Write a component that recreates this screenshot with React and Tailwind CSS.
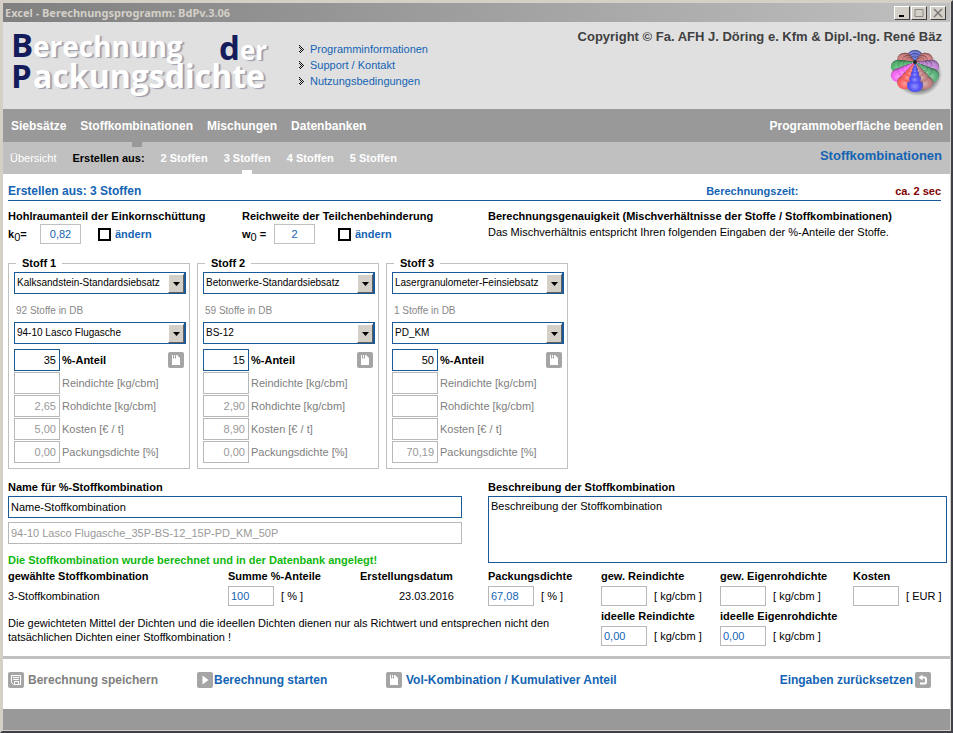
import React from "react";

const mainNav = ["Siebsätze", "Stoffkombinationen", "Mischungen", "Datenbanken"];
const subNav = ["2 Stoffen", "3 Stoffen", "4 Stoffen", "5 Stoffen"];
const infoLinks = ["Programminformationen", "Support / Kontakt", "Nutzungsbedingungen"];

const stoffe = [
  {
    nr: 1,
    siebsatz: "Kalksandstein-Standardsiebsatz",
    anzahl: 92,
    stoff: "94-10 Lasco Flugasche",
    anteil: "35",
    rohdichte: "2,65",
    kosten: "5,00",
    packung: "0,00",
  },
  {
    nr: 2,
    siebsatz: "Betonwerke-Standardsiebsatz",
    anzahl: 59,
    stoff: "BS-12",
    anteil: "15",
    rohdichte: "2,90",
    kosten: "8,90",
    packung: "0,00",
  },
  {
    nr: 3,
    siebsatz: "Lasergranulometer-Feinsiebsatz",
    anzahl: 1,
    stoff: "PD_KM",
    anteil: "50",
    rohdichte: "",
    kosten: "",
    packung: "70,19",
  },
];

// One colour per arm, clockwise from the bottom
const armColors = [
  "#3a3af8", "#fa4a4a", "#f452f4", "#3cae5c", "#d07070", "#6474f0",
  "#d87878", "#b878d0", "#44a868", "#b87070",
];

function Logo() {
  return (
    <svg
      width="270"
      height="76"
      viewBox="0 0 270 76"
      role="img"
      aria-label="Berechnung der Packungsdichte"
      className="shrink-0 font-['Open_Sans',sans-serif] font-bold"
    >
      <g fill="#ffffff" className="[text-shadow:2px_1px_1px_#9a9cab]">
        <text x="30" y="35" fontSize="28">erechnung</text>
        <text x="237" y="38" fontSize="26">er</text>
        <text x="30" y="66" fontSize="32">ackungsdichte</text>
      </g>
      <g fill="#141c5c">
        <text x="8" y="35" fontSize="33">B</text>
        <text x="216" y="38" fontSize="33">d</text>
        <text x="8" y="66" fontSize="33">P</text>
      </g>
    </svg>
  );
}

function SphereCluster() {
  const balls = [];
  for (let ring = 0; ring < 7; ring++) {
    const t = Math.pow(0.72, ring);
    const arms = armColors.map((color, i) => {
      const a = Math.PI / 2 + (i * Math.PI * 2) / armColors.length;
      return {
        key: `${ring}-${i}`,
        cx: 25 + Math.cos(a) * 17 * t,
        cy: 13 + 9 * t + Math.sin(a) * 14 * t,
        rx: 8 * t,
        ry: 7 * t,
        color,
      };
    });
    // the lower balls lie in front
    arms.sort((p, q) => p.cy - q.cy);
    balls.push(...arms);
  }
  return (
    <svg width="52" height="48" viewBox="0 0 52 48" aria-hidden="true">
      <defs>
        <radialGradient id="shine" cx="0.48" cy="0.6" r="0.6">
          <stop offset="0" stopColor="#fff" stopOpacity="0.45" />
          <stop offset="0.6" stopColor="#fff" stopOpacity="0.1" />
          <stop offset="1" stopColor="#000" stopOpacity="0.55" />
        </radialGradient>
        <radialGradient id="ground">
          <stop offset="0.75" stopColor="#555" stopOpacity="0.7" />
          <stop offset="1" stopColor="#555" stopOpacity="0" />
        </radialGradient>
      </defs>
      <ellipse cx="28" cy="25" rx="24" ry="22" fill="url(#ground)" />
      {balls.map((b) => (
        <g key={b.key}>
          <ellipse cx={b.cx} cy={b.cy} rx={b.rx} ry={b.ry} fill={b.color} />
          <ellipse cx={b.cx} cy={b.cy} rx={b.rx} ry={b.ry} fill="url(#shine)" />
        </g>
      ))}
      <circle cx="25" cy="13" r="2" fill="#222" />
    </svg>
  );
}

function BulletArrow() {
  return (
    <svg width="5" height="8" viewBox="0 0 5 8" fill="#111" shapeRendering="crispEdges" aria-hidden="true">
      <path d="M0 0h1v1H0zM1 1h1v1H1zM0 2h1v1H0zM2 2h1v1H2zM1 3h1v1H1zM3 3h1v1H3zM2 4h1v1H2zM4 4h1v1H4zM1 5h1v1H1zM3 5h1v1H3zM0 6h1v1H0zM2 6h1v1H2zM1 7h1v1H1z" />
    </svg>
  );
}

function ToolIcon({ type }) {
  return (
    <svg width="16" height="16" viewBox="0 0 16 16" className="shrink-0" aria-hidden="true">
      <rect width="16" height="16" rx="2" fill="#a5a5a5" />
      {type === "book" && (
        <>
          <path d="M4 3h5l3 3v7H4z" fill="#fff" />
          <path d="M5 3h3v4L6.500 5.500 5 7z" fill="#a5a5a5" />
          <path d="M6 3h1v2.500H6z" fill="#fff" />
        </>
      )}
      {type === "play" && <path d="M5.500 3.500 11.500 8l-6 4.500z" fill="#fff" />}
      {type === "save" && (
        <>
          <path d="M3.500 3.500h9v9h-7l-2-2z" fill="none" stroke="#fff" />
          <path d="M5 5.500h6M5 7.500h6M6.500 12.500v-3h4v3" fill="none" stroke="#fff" />
        </>
      )}
      {type === "reset" && (
        <>
          <path d="M7 5.500h2.500a1.500 1.500 0 0 1 1.500 1.500v3a1.500 1.500 0 0 1-1.500 1.500H5" fill="none" stroke="#fff" strokeWidth="2" />
          <path d="M3.500 5.500 7.500 2.500v6z" fill="#fff" />
        </>
      )}
    </svg>
  );
}

function WindowButton({ label, children }) {
  return (
    <button
      type="button"
      aria-label={label}
      className="flex h-[14px] w-4 items-center justify-center border border-t-white border-l-white border-r-[#404040] border-b-[#404040] bg-[#d4d0c8]"
    >
      <svg width="10" height="10" viewBox="0 0 10 10" fill="none" className="shrink-0" aria-hidden="true">
        {children}
      </svg>
    </button>
  );
}

function DropDown({ label, value }) {
  return (
    <div className="relative">
      <select
        aria-label={label}
        defaultValue={value}
        className="block h-[22px] w-full appearance-none rounded-none border border-r-2 border-[#1b5a96] bg-white pr-[18px] pl-[2px] text-[10px] text-black"
      >
        <option>{value}</option>
      </select>
      <span className="pointer-events-none absolute top-[2px] right-[2px] flex h-[19px] w-4 items-center justify-center border border-t-white border-l-white border-r-[#606060] border-b-[#606060] bg-[#d4d0c8]">
        <svg width="7" height="4" viewBox="0 0 7 4" aria-hidden="true">
          <path d="M0 0h7L3.500 4z" />
        </svg>
      </span>
    </div>
  );
}

function ValueRow({ id, label, value }) {
  return (
    <div className="flex items-center gap-[2px] text-[#808080]">
      <input
        id={id}
        readOnly
        defaultValue={value}
        className="h-[22px] w-[46px] border border-[#b8b8b8] bg-white px-[3px] text-right text-[#999]"
      />
      <label htmlFor={id}>{label}</label>
    </div>
  );
}

function StoffBox({ data }) {
  const id = `stoff${data.nr}`;
  return (
    <fieldset className="w-[182px] border border-[#c0c0c0] pr-[3px] pb-[5px] pl-[5px]">
      <legend className="ml-[2px] px-[6px] leading-[14px] font-bold">Stoff {data.nr}</legend>
      <div className="mt-[2px]">
        <DropDown label={`Siebsatz ${data.nr}`} value={data.siebsatz} />
      </div>
      <p className="mt-[10px] mb-1 pl-[2px] text-[10px] leading-[14px] text-[#888]">{data.anzahl} Stoffe in DB</p>
      <DropDown label={`Stoff ${data.nr}`} value={data.stoff} />
      <div className="mt-[5px] flex flex-col gap-px">
        <div className="flex items-center gap-[2px]">
          <input
            id={`${id}-anteil`}
            defaultValue={data.anteil}
            className="h-[22px] w-[46px] border border-[#1b5a96] bg-white px-[3px] text-right"
          />
          <label htmlFor={`${id}-anteil`} className="flex-1 font-bold">
            %-Anteil
          </label>
          <button type="button" aria-label={`Stoff ${data.nr} anzeigen`} className="mr-[2px]">
            <ToolIcon type="book" />
          </button>
        </div>
        <ValueRow id={`${id}-rein`} label="Reindichte [kg/cbm]" value="" />
        <ValueRow id={`${id}-roh`} label="Rohdichte [kg/cbm]" value={data.rohdichte} />
        <ValueRow id={`${id}-kosten`} label="Kosten [€ / t]" value={data.kosten} />
        <ValueRow id={`${id}-packung`} label="Packungsdichte [%]" value={data.packung} />
      </div>
    </fieldset>
  );
}

function Parameter({ id, title, symbol, value, checkClass }) {
  return (
    <div>
      <h2 className="leading-[15px] font-bold">{title}</h2>
      <div className="flex h-5 items-center">
        <label htmlFor={id} className="w-8 font-bold whitespace-nowrap">
          {symbol}
          <sub className="text-[11px] font-normal">0</sub>
          {symbol === "w" ? " =" : "="}
        </label>
        <input
          id={id}
          readOnly
          defaultValue={value}
          className="h-5 w-[41px] border border-[#c0c0c0] bg-white text-center text-[#1464b4]"
        />
        <input
          id={`${id}-change`}
          type="checkbox"
          className={`${checkClass} size-[13px] appearance-none border-2 border-black bg-white checked:bg-black`}
        />
        <label htmlFor={`${id}-change`} className="pl-1 font-bold text-[#1464b4]">
          ändern
        </label>
      </div>
    </div>
  );
}

function Result({ id, label, value, unit }) {
  return (
    <div className="whitespace-nowrap">
      <label htmlFor={id} className="block leading-[14px] font-bold">
        {label}
      </label>
      <div className="mt-[3px] flex items-center gap-[7px]">
        <input
          id={id}
          readOnly
          defaultValue={value}
          className="h-5 w-[46px] border border-[#b8b8b8] bg-white px-[2px] text-[#1464b4]"
        />
        <span>[ {unit} ]</span>
      </div>
    </div>
  );
}

function App() {
  return (
    <div className="flex min-h-screen flex-col border-2 border-t-[#d4d0c8] border-r-[#404048] border-b-[#404048] border-l-[#d4d0c8] bg-white font-['Liberation_Sans',Arial,sans-serif] text-[11px] leading-[14px] text-black">
      <div className="flex flex-1 flex-col border border-[#d4d0c8]">
        {/* Title bar */}
        <div className="flex h-[19px] items-center gap-px bg-linear-to-r from-[#808080] to-[#c0c0c0] pr-1 pl-[2px]">
          <h1 className="flex-1 font-['Noto_Sans',sans-serif] font-bold text-[#d4d0c8]">
            Excel - Berechnungsprogramm: BdPv.3.06
          </h1>
          <WindowButton label="Minimieren">
            <path d="M2 8h5" stroke="#000" strokeWidth="2" />
          </WindowButton>
          <WindowButton label="Maximieren">
            <path d="M1 1.500h8v7H1z" stroke="#888" />
          </WindowButton>
          <span className="w-px" />
          <WindowButton label="Schließen">
            <path d="M1 1l8 8M9 1l-8 8" stroke="#777" strokeWidth="1.500" />
          </WindowButton>
        </div>

        <header className="flex h-[87px] bg-[#e0e0e0] pr-2">
          <Logo />
          <ul className="mt-[19px] ml-[26px] flex-1">
            {infoLinks.map((text) => (
              <li key={text} className="flex h-4 items-center gap-[6px]">
                <BulletArrow />
                <a href="#" className="text-[#1464b4]">
                  {text}
                </a>
              </li>
            ))}
          </ul>
          <div className="flex flex-col items-end pt-[7px]">
            <p className="text-[13px] leading-4 font-bold text-[#404040]">
              Copyright © Fa. AFH J. Döring e. Kfm &amp; Dipl.-Ing. René Bäz
            </p>
            <div className="mt-1">
              <SphereCluster />
            </div>
          </div>
        </header>

        <nav className="flex h-[33px] items-center gap-[14px] bg-[#999] pr-[7px] pl-2 text-[12px] font-bold text-white">
          {mainNav.map((text) => (
            <a key={text} href="#" className="relative flex h-full items-center">
              {text}
              {text === "Stoffkombinationen" && (
                <span className="absolute top-full left-1/2 h-[5px] w-[10px] -translate-x-1/2 bg-[#999]" />
              )}
            </a>
          ))}
          <a href="#" className="ml-auto">
            Programmoberfläche beenden
          </a>
        </nav>

        <nav className="flex h-8 items-center gap-4 bg-[#c0c0c0] pr-2 pl-[7px] font-bold text-white">
          <a href="#" className="font-normal">
            Übersicht
          </a>
          <span className="text-black">Erstellen aus:</span>
          {subNav.map((text) => (
            <a key={text} href="#" className="relative flex h-full items-center">
              {text}
              {text === "3 Stoffen" && (
                <span className="absolute bottom-0 left-1/2 h-1 w-[10px] -translate-x-1/2 bg-white" />
              )}
            </a>
          ))}
          <span className="ml-auto pb-1 text-[13px] text-[#1464b4]">Stoffkombinationen</span>
        </nav>

        <main className="flex-1 pt-[9px] pr-[3px] pl-[5px]">
          <div className="mr-[6px] flex h-[18px] items-center border-b border-[#1b5a96] pb-[2px] font-bold text-[#1464b4]">
            <h2 className="flex-1 text-[12px]">Erstellen aus: 3 Stoffen</h2>
            <span className="w-[189px]">Berechnungszeit:</span>
            <span className="text-[#800000]">ca. 2 sec</span>
          </div>

          <section className="mt-2 grid grid-cols-[234px_246px_1fr]">
            <Parameter
              id="k0"
              title="Hohlraumanteil der Einkornschüttung"
              symbol="k"
              value="0,82"
              checkClass="ml-[17px]"
            />
            <Parameter
              id="w0"
              title="Reichweite der Teilchenbehinderung"
              symbol="w"
              value="2"
              checkClass="ml-[23px]"
            />
            <div>
              <h2 className="leading-[15px] font-bold">
                Berechnungsgenauigkeit (Mischverhältnisse der Stoffe / Stoffkombinationen)
              </h2>
              <p className="mt-px">Das Mischverhältnis entspricht Ihren folgenden Eingaben der %-Anteile der Stoffe.</p>
            </div>
          </section>

          <section className="mt-3 flex gap-[7px]">
            {stoffe.map((s) => (
              <StoffBox key={s.nr} data={s} />
            ))}
          </section>

          <section className="mt-[11px] flex gap-[26px]">
            <div className="w-[454px]">
              <label htmlFor="name" className="block font-bold">
                Name für %-Stoffkombination
              </label>
              <input
                id="name"
                defaultValue="Name-Stoffkombination"
                className="mt-[2px] block h-[22px] w-full border border-[#1b5a96] bg-white px-[2px]"
              />
              <input
                aria-label="Vorgeschlagener Name"
                readOnly
                defaultValue="94-10 Lasco Flugasche_35P-BS-12_15P-PD_KM_50P"
                className="mt-1 block h-[22px] w-full border border-[#b8b8b8] bg-white px-[2px] text-[#999]"
              />
              <p className="mt-[9px] font-bold text-[#10b810]">
                Die Stoffkombination wurde berechnet und in der Datenbank angelegt!
              </p>
              <div className="mt-[2px] grid grid-cols-[220px_132px_1fr]">
                <div>
                  <h3 className="font-bold">gewählte Stoffkombination</h3>
                  <p className="mt-[6px]">3-Stoffkombination</p>
                </div>
                <Result id="summe" label="Summe %-Anteile" value="100" unit="%" />
                <div>
                  <h3 className="font-bold">Erstellungsdatum</h3>
                  <p className="mt-[6px] pr-2 text-right">23.03.2016</p>
                </div>
              </div>
              <p className="mt-[10px] w-[552px]">
                Die gewichteten Mittel der Dichten und die ideellen Dichten dienen nur als Richtwert und entsprechen
                nicht den tatsächlichen Dichten einer Stoffkombination !
              </p>
            </div>

            <div className="flex-1">
              <label htmlFor="beschreibung" className="block font-bold">
                Beschreibung der Stoffkombination
              </label>
              <textarea
                id="beschreibung"
                defaultValue="Beschreibung der Stoffkombination"
                className="mt-[2px] block h-[67px] w-full resize-none border border-[#1b5a96] bg-white px-[2px] py-[2px]"
              />
              <div className="mt-[6px] grid grid-cols-[113px_119px_133px_1fr] gap-y-[3px]">
                <Result id="packung" label="Packungsdichte" value="67,08" unit="%" />
                <Result id="rein" label="gew. Reindichte" value="" unit="kg/cbm" />
                <Result id="eigen" label="gew. Eigenrohdichte" value="" unit="kg/cbm" />
                <Result id="kosten" label="Kosten" value="" unit="EUR" />
                <span />
                <Result id="irein" label="ideelle Reindichte" value="0,00" unit="kg/cbm" />
                <Result id="ieigen" label="ideelle Eigenrohdichte" value="0,00" unit="kg/cbm" />
              </div>
            </div>
          </section>
        </main>

        <div className="mt-[10px] flex h-[53px] items-start border-t-[3px] border-[#c0c0c0] pt-[13px] pr-[19px] pl-[5px] text-[12px] leading-4 font-bold text-[#1464b4]">
          <button type="button" className="flex w-[189px] items-center gap-1 text-[#808080]">
            <ToolIcon type="save" />
            Berechnung speichern
          </button>
          <button type="button" className="flex w-[189px] items-center gap-px">
            <ToolIcon type="play" />
            Berechnung starten
          </button>
          <button type="button" className="flex items-center gap-1">
            <ToolIcon type="book" />
            Vol-Kombination / Kumulativer Anteil
          </button>
          <button type="button" className="ml-auto flex items-center gap-[2px]">
            Eingaben zurücksetzen
            <ToolIcon type="reset" />
          </button>
        </div>
        <footer className="h-[21px] bg-[#999]" />
      </div>
    </div>
  );
}

export default App;
